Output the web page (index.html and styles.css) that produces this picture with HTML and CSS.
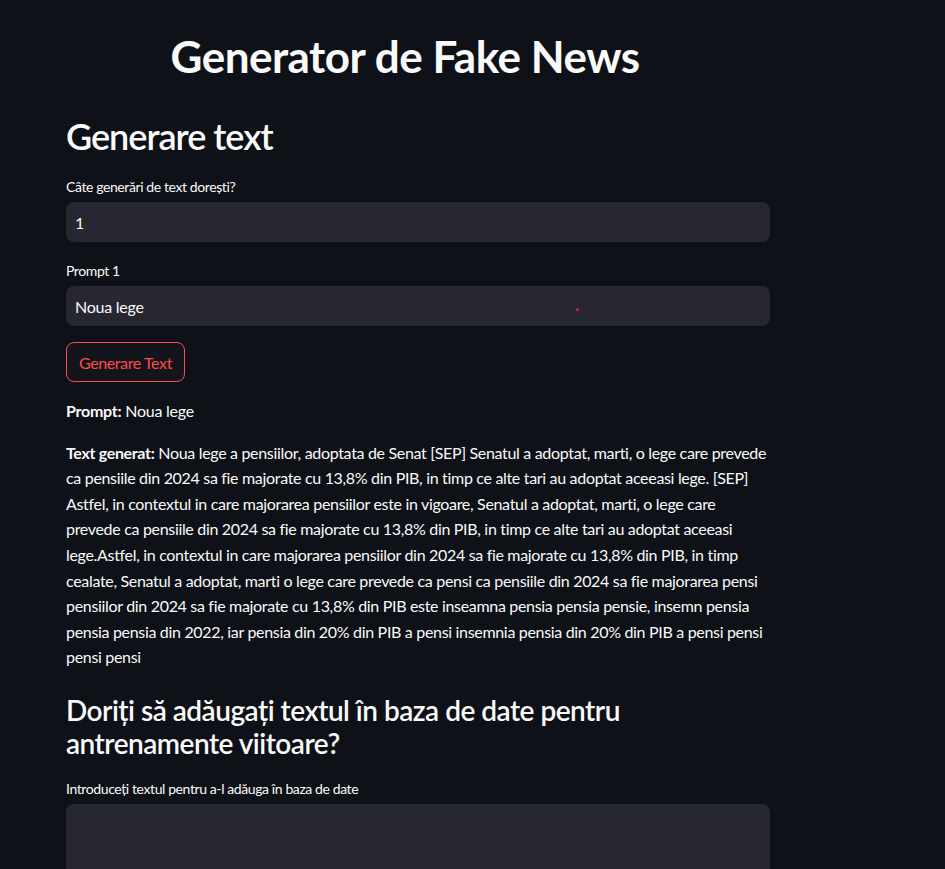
FILE: index.html
```html
<!DOCTYPE html>
<html lang="ro">
<head>
<meta charset="utf-8">
<title>Generator de Fake News</title>
<link rel="stylesheet" href="styles.css">
</head>
<body>
<main class="main">
  <h1 class="title">Generator de Fake News</h1>
  <h2 class="section">Generare text</h2>
  <div class="field">
    <label class="label">Câte generări de text dorești?</label>
    <div class="input num">1</div>
  </div>
  <div class="field">
    <label class="label">Prompt 1</label>
    <div class="input text">Noua lege<span class="dot"></span></div>
  </div>
  <button class="btn">Generare Text</button>
  <p class="para"><b>Prompt:</b> Noua lege</p>
  <p class="para para-gen"><b>Text generat:</b> Noua lege a pensiilor, adoptata de Senat [SEP] Senatul a adoptat, marti, o lege care prevede<br>ca pensiile din 2024 sa fie majorate cu 13,8% din PIB, in timp ce alte tari au adoptat aceeasi lege. [SEP]<br>Astfel, in contextul in care majorarea pensiilor este in vigoare, Senatul a adoptat, marti, o lege care<br>prevede ca pensiile din 2024 sa fie majorate cu 13,8% din PIB, in timp ce alte tari au adoptat aceeasi<br>lege.Astfel, in contextul in care majorarea pensiilor din 2024 sa fie majorate cu 13,8% din PIB, in timp<br>cealate, Senatul a adoptat, marti o lege care prevede ca pensi ca pensiile din 2024 sa fie majorarea pensi<br>pensiilor din 2024 sa fie majorate cu 13,8% din PIB este inseamna pensia pensia pensie, insemn pensia<br>pensia pensia din 2022, iar pensia din 20% din PIB a pensi insemnia pensia din 20% din PIB a pensi pensi<br>pensi pensi</p>
  <h3 class="sub">Doriți să adăugați textul în baza de date pentru antrenamente viitoare?</h3>
  <div class="field">
    <label class="label">Introduceți textul pentru a-l adăuga în baza de date</label>
    <div class="textarea"></div>
  </div>
</main>
</body>
</html>
```
FILE: styles.css
```css
* { box-sizing: border-box; }
html, body { margin: 0; padding: 0; background: #0e1117; }
body {
  color: #fafafa;
  font-family: "Lato", "Open Sans", sans-serif;
  height: 869px;
  overflow: hidden;
}
.main {
  width: 704px;
  margin-left: 66px;
  padding-top: 28px;
}
.title {
  margin: 0;
  font-size: 44px;
  font-weight: 700;
  line-height: 56px;
  letter-spacing: -0.5px;
  text-align: center;
  padding-right: 26px;
}
.section {
  margin: 30px 0 0;
  font-size: 36px;
  font-weight: 600;
  line-height: 44px;
  letter-spacing: -1px;
}
.field { margin-top: 19px; }
.section + .field { margin-top: 19px; }
.label {
  display: block;
  font-size: 14px;
  line-height: 20px;
  margin-bottom: 5px;
  letter-spacing: -0.4px;
}
.input {
  position: relative;
  height: 40px;
  background: #262730;
  border-radius: 8px;
  padding: 0 9px;
  display: flex;
  align-items: center;
  font-size: 16px;
  letter-spacing: -0.25px;
}
.dot {
  position: absolute;
  left: 510px;
  top: 22px;
  width: 3px;
  height: 3px;
  border-radius: 50%;
  background: #e0212b;
}
.btn {
  margin-top: 16px;
  height: 40px;
  padding: 0 12px;
  background: #12151c;
  border: 1px solid #ff4b4b;
  border-radius: 8px;
  color: #ff4b4b;
  font-family: inherit;
  font-size: 16px;
  letter-spacing: -0.4px;
  display: block;
}
.para {
  margin: 16px 0 0;
  font-size: 16px;
  line-height: 25.6px;
  letter-spacing: -0.25px;
}
.para-gen {
  white-space: nowrap;
  letter-spacing: -0.32px;
}
.sub {
  margin: 24px 0 0;
  font-size: 28px;
  font-weight: 600;
  line-height: 33px;
  letter-spacing: -0.5px;
}
.textarea {
  height: 120px;
  background: #262730;
  border-radius: 8px;
}
```
